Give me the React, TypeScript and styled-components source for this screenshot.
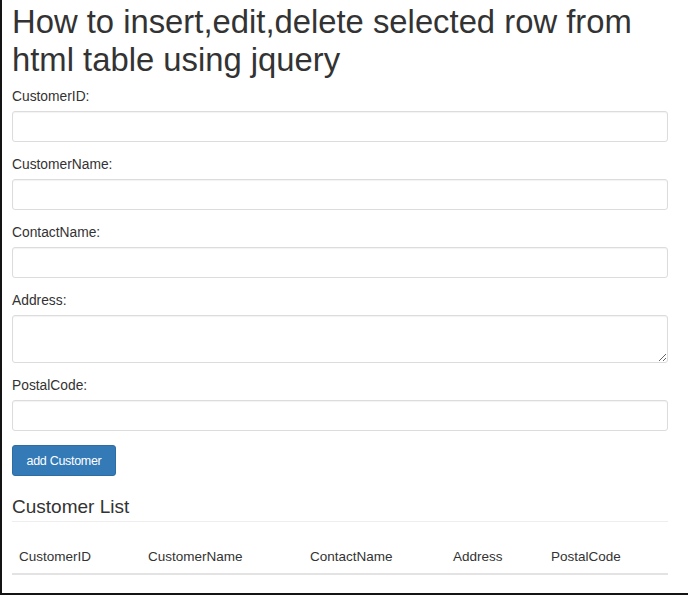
import { FC } from 'react';
import styled, { createGlobalStyle } from 'styled-components';

const GlobalStyle = createGlobalStyle`
  html, body {
    margin: 0;
    padding: 0;
    background: #fff;
  }
  body {
    font-family: 'Liberation Sans', Arial, sans-serif;
    color: #333;
  }
  * {
    box-sizing: border-box;
  }
`;

const Frame = styled.div`
  width: 688px;
  height: 595px;
  border-left: 2px solid #141414;
  border-bottom: 2px solid #141414;
  padding: 3px 20px 0 10px;
  overflow: hidden;
`;

const Title = styled.h1`
  margin: 0 0 9px;
  font-size: 32.8px;
  line-height: 38px;
  font-weight: normal;
  color: #333;
`;

const FormGroup = styled.div`
  display: flex;
  flex-direction: column;
  margin-bottom: 14px;
`;

const Label = styled.label`
  font-size: 13.8px;
  line-height: 18px;
  font-weight: normal;
  color: #333;
  margin-bottom: 5px;
`;

const Input = styled.input`
  height: 31px;
  width: 100%;
  border: 1px solid #dcdcdc;
  border-radius: 3px;
  box-shadow: inset 0 1px 1px rgba(0, 0, 0, 0.05);
  background: #fff;
  font-size: 13px;
  padding: 5px 11px;
  outline: none;
`;

const TextArea = styled.textarea`
  height: 48px;
  width: 100%;
  border: 1px solid #dcdcdc;
  border-radius: 3px;
  box-shadow: inset 0 1px 1px rgba(0, 0, 0, 0.05);
  background: #fff;
  font-size: 13px;
  padding: 5px 11px;
  outline: none;
  display: block;
  resize: vertical;
`;

const Button = styled.button`
  height: 31px;
  width: 104px;
  padding: 0;
  background: #337ab7;
  border: 1px solid #2e6da4;
  border-radius: 3px;
  color: #fff;
  font-family: 'Liberation Sans', Arial, sans-serif;
  font-size: 12.5px;
  letter-spacing: -0.3px;
  cursor: pointer;
`;

const ListTitle = styled.h3`
  margin: 20px 0 18px;
  font-size: 19px;
  line-height: 21px;
  font-weight: normal;
  color: #333;
  padding-bottom: 4px;
  border-bottom: 1px solid #eee;
`;

const Table = styled.table`
  width: 100%;
  border-collapse: collapse;
  table-layout: fixed;
`;

const Th = styled.th<{ $w: number }>`
  width: ${(p) => p.$w}px;
  text-align: left;
  font-size: 13.5px;
  line-height: 18px;
  font-weight: normal;
  color: #333;
  padding: 8px 7px 7px;
  border-bottom: 2px solid #e3e3e3;
`;

const fields = [
  { name: 'CustomerID' },
  { name: 'CustomerName' },
  { name: 'ContactName' },
  { name: 'Address', multi: true },
  { name: 'PostalCode' },
];

const columns: [string, number][] = [
  ['CustomerID', 129],
  ['CustomerName', 162],
  ['ContactName', 143],
  ['Address', 98],
  ['PostalCode', 124],
];

const App: FC = () => (
  <>
    <GlobalStyle />
    <Frame>
      <Title>How to insert,edit,delete selected row from html table using jquery</Title>
      {fields.map((f) => (
        <FormGroup key={f.name}>
          <Label>{f.name}:</Label>
          {f.multi ? <TextArea /> : <Input type="text" />}
        </FormGroup>
      ))}
      <Button>add Customer</Button>
      <ListTitle>Customer List</ListTitle>
      <Table>
        <thead>
          <tr>
            {columns.map(([c, w]) => (
              <Th key={c} $w={w}>
                {c}
              </Th>
            ))}
          </tr>
        </thead>
      </Table>
    </Frame>
  </>
);

export default App;
